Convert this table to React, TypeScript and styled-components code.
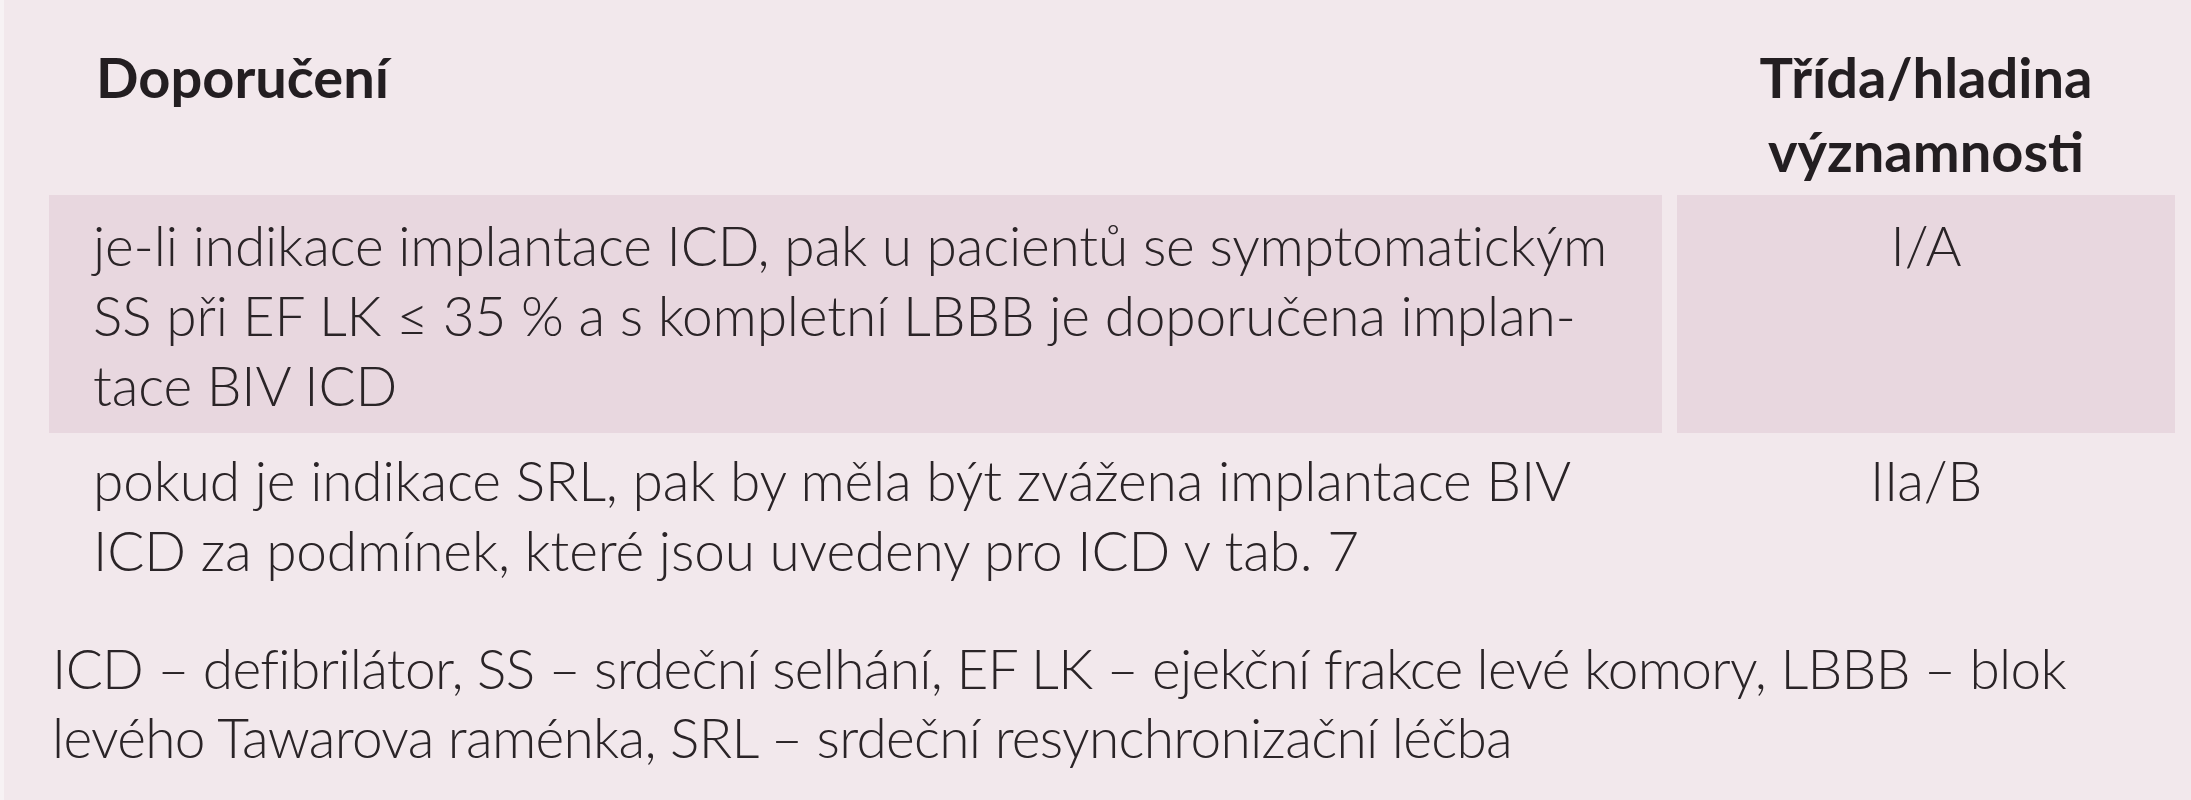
import React from "react";
import styled, { createGlobalStyle } from "styled-components";

const GlobalStyle = createGlobalStyle`
  html, body {
    margin: 0;
    padding: 0;
    background: #f2e8ec;
  }
  body {
    font-family: Lato, "Liberation Sans", Arial, sans-serif;
    color: #2a2427;
  }
`;

const Page = styled.div`
  box-sizing: border-box;
  width: 2191px;
  height: 800px;
  border-left: 4px solid #f7f2f4;
  padding: 40px 16px 0 45px;
  background: #f2e8ec;
  overflow: hidden;
`;

const Grid = styled.div`
  display: grid;
  grid-template-columns: 1613px 498px;
  column-gap: 15px;
`;

const HeadCell = styled.div<{ $center?: boolean }>`
  font-weight: 700;
  font-size: 56px;
  line-height: 74px;
  padding: 0 0 7px ${(p) => (p.$center ? "0" : "47px")};
  text-align: ${(p) => (p.$center ? "center" : "left")};
  white-space: nowrap;
  color: #231e21;
`;

const Cell = styled.div<{ $shaded?: boolean; $center?: boolean; $pt: number; $pb: number }>`
  background: ${(p) => (p.$shaded ? "#e8d7df" : "transparent")};
  font-size: 55px;
  font-weight: 300;
  letter-spacing: -0.15px;
  line-height: 70px;
  padding: ${(p) => p.$pt}px 0 ${(p) => p.$pb}px ${(p) => (p.$center ? "0" : "44px")};
  text-align: ${(p) => (p.$center ? "center" : "left")};
  white-space: nowrap;
`;

const Footnote = styled.div`
  font-size: 55px;
  font-weight: 300;
  letter-spacing: -0.7px;
  line-height: 69px;
  padding: 49px 0 0 3px;
  white-space: nowrap;
`;

export default function App() {
  return (
    <>
      <GlobalStyle />
      <Page>
        <Grid>
          <HeadCell>Doporučení</HeadCell>
          <HeadCell $center>
            Třída/hladina
            <br />
            významnosti
          </HeadCell>

          <Cell $shaded $pt={15} $pb={13}>
            je-li indikace implantace ICD, pak u pacientů se symptomatickým
            <br />
            SS při EF LK ≤ 35 % a s kompletní LBBB je doporučena implan-
            <br />
            tace BIV ICD
          </Cell>
          <Cell $shaded $center $pt={15} $pb={13}>
            I/A
          </Cell>

          <Cell $pt={12} $pb={0}>
            pokud je indikace SRL, pak by měla být zvážena implantace BIV
            <br />
            ICD za podmínek, které jsou uvedeny pro ICD v tab. 7
          </Cell>
          <Cell $center $pt={12} $pb={0}>
            IIa/B
          </Cell>
        </Grid>
        <Footnote>
          ICD – defibrilátor, SS – srdeční selhání, EF LK – ejekční frakce levé komory, LBBB – blok
          <br />
          levého Tawarova raménka, SRL – srdeční resynchronizační léčba
        </Footnote>
      </Page>
    </>
  );
}
